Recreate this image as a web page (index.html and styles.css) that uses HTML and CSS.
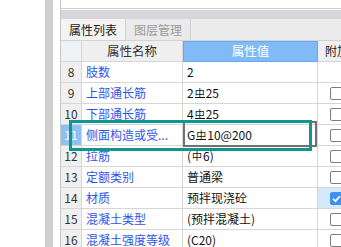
FILE: index.html
```html
<!DOCTYPE html>
<html>
<head>
<meta charset="utf-8">
<link rel="stylesheet" href="styles.css">
</head>
<body>
<div class="app">
  <div class="gutter"></div>
  <div class="scroll"></div>
  <div class="gap"></div>
  <div class="panel">
    <div class="top"></div>
    <div class="titlebar"></div>
    <div class="tabs">
      <div class="tab active">属性列表</div>
      <div class="tab">图层管理</div>
    </div>
    <div class="grid">
      <div class="row head">
        <div class="c num"></div>
        <div class="c name">属性名称</div>
        <div class="c val">属性值</div>
        <div class="c ext">附加</div>
      </div>
      <div class="row">
        <div class="c num">8</div>
        <div class="c name">肢数</div>
        <div class="c val">2</div>
        <div class="c ext"></div>
      </div>
      <div class="row">
        <div class="c num">9</div>
        <div class="c name">上部通长筋</div>
        <div class="c val">2<span class="g3">中</span>25</div>
        <div class="c ext"><span class="box"></span></div>
      </div>
      <div class="row">
        <div class="c num">10</div>
        <div class="c name">下部通长筋</div>
        <div class="c val">4<span class="g3">中</span>25</div>
        <div class="c ext"><span class="box"></span></div>
      </div>
      <div class="row sel">
        <div class="c num">11</div>
        <div class="c name">侧面构造或受...</div>
        <div class="c val">G<span class="g3">中</span>10@200</div>
        <div class="c ext"><span class="box"></span></div>
      </div>
      <div class="row">
        <div class="c num">12</div>
        <div class="c name">拉筋</div>
        <div class="c val">(<span class="g1">中</span>6)</div>
        <div class="c ext"><span class="box"></span></div>
      </div>
      <div class="row">
        <div class="c num">13</div>
        <div class="c name">定额类别</div>
        <div class="c val">普通梁</div>
        <div class="c ext"><span class="box"></span></div>
      </div>
      <div class="row">
        <div class="c num">14</div>
        <div class="c name">材质</div>
        <div class="c val">预拌现浇砼</div>
        <div class="c ext on"><span class="box checked"><svg width="13" height="13" viewBox="0 0 13 13"><path d="M3 6.8 L5.5 9.2 L10 4" fill="none" stroke="#fff" stroke-width="1.8"/></svg></span></div>
      </div>
      <div class="row">
        <div class="c num">15</div>
        <div class="c name">混凝土类型</div>
        <div class="c val">(预拌混凝土)</div>
        <div class="c ext"><span class="box"></span></div>
      </div>
      <div class="row">
        <div class="c num">16</div>
        <div class="c name">混凝土强度等级</div>
        <div class="c val">(C20)</div>
        <div class="c ext"><span class="box"></span></div>
      </div>
    </div>
  </div>
  <div class="editbox"></div>
  <div class="focus"></div>
</div>
</body>
</html>
```
FILE: styles.css
```css
* { box-sizing: border-box; }
html, body { margin: 0; padding: 0; background: #fff; }
body {
  width: 341px; height: 247px; overflow: hidden;
  font-family: "Noto Sans CJK SC", "Microsoft YaHei", sans-serif;
  font-size: 12px; color: #111;
}
.app { position: relative; display: flex; height: 247px; }
.gutter { width: 45px; flex: none; background: #fff; }
.scroll { width: 8px; flex: none; background: #cfcfcf; }
.gap { width: 7px; flex: none; background: #fff; }
.panel { flex: 1; border-left: 1px solid #c8c8c8; display: flex; flex-direction: column; min-width: 0; }
.top { height: 10px; border-top: 8px solid #fff; border-bottom: 1px solid #fff; background: #d0d0d0; flex: none; }
.titlebar { height: 9px; background: #d7d7db; flex: none; }
.tabs { height: 22px; display: flex; background: #ececec; border-bottom: 1px solid #d2d2d2; flex: none; }
.tab { width: 65px; display: flex; align-items: center; padding-left: 8px; color: #9a9a9a; border-right: 1px solid #d2d2d2; background: #eaeaea; font-size: 12px; }
.tab.active { width: 65px; color: #222; background: #f3f3f3; }
.grid { display: flex; flex-direction: column; }
.row { display: grid; grid-template-columns: 21px 101px 135px 30px; height: 21px; }
.c { border-right: 1px solid #d6d6d6; border-bottom: 1px solid #d6d6d6; display: flex; align-items: center; white-space: nowrap; overflow: hidden; line-height: 1; }
.num { justify-content: center; background: #f0f0f0; color: #333; font-size: 12px; }
.name { padding-left: 4px; color: #2f55e8; }
.val { padding-left: 4px; color: #111; }
.ext { padding-left: 12px; }
.ext.on { background: #d6e8fb; }
.head .num { background: #eef2f6; }
.head .name { justify-content: center; padding-left: 0; background: #efefef; color: #333; font-size: 12.5px; }
.head .val { justify-content: center; padding-left: 0; background: #80bbf7; border: 1px solid #66a9f0; color: #fff; font-size: 12.5px; }
.head .ext { background: #efefef; padding-left: 7px; color: #222; }
.sel .num { background: #8fc0f4; color: #fff; }
.g3, .g1 { display: inline-block; font-size: 10px; margin: 0 1px; }
.g3 { border-bottom: 1px solid #111; line-height: 9px; }
.box { display: inline-block; width: 13px; height: 13px; border: 1px solid #7d7d7d; border-radius: 2px; background: #fff; flex: none; }
.box.checked { background: #3c8eef; border-color: #3c8eef; position: relative; }
.box.checked svg { position: absolute; left: -1px; top: -1px; }
.editbox { position: absolute; left: 183px; top: 121px; width: 134px; height: 26px; border: 2px solid #727272; }
.focus { position: absolute; left: 69px; top: 120px; width: 243px; height: 31px; border: 3px solid #10968f; }
```
